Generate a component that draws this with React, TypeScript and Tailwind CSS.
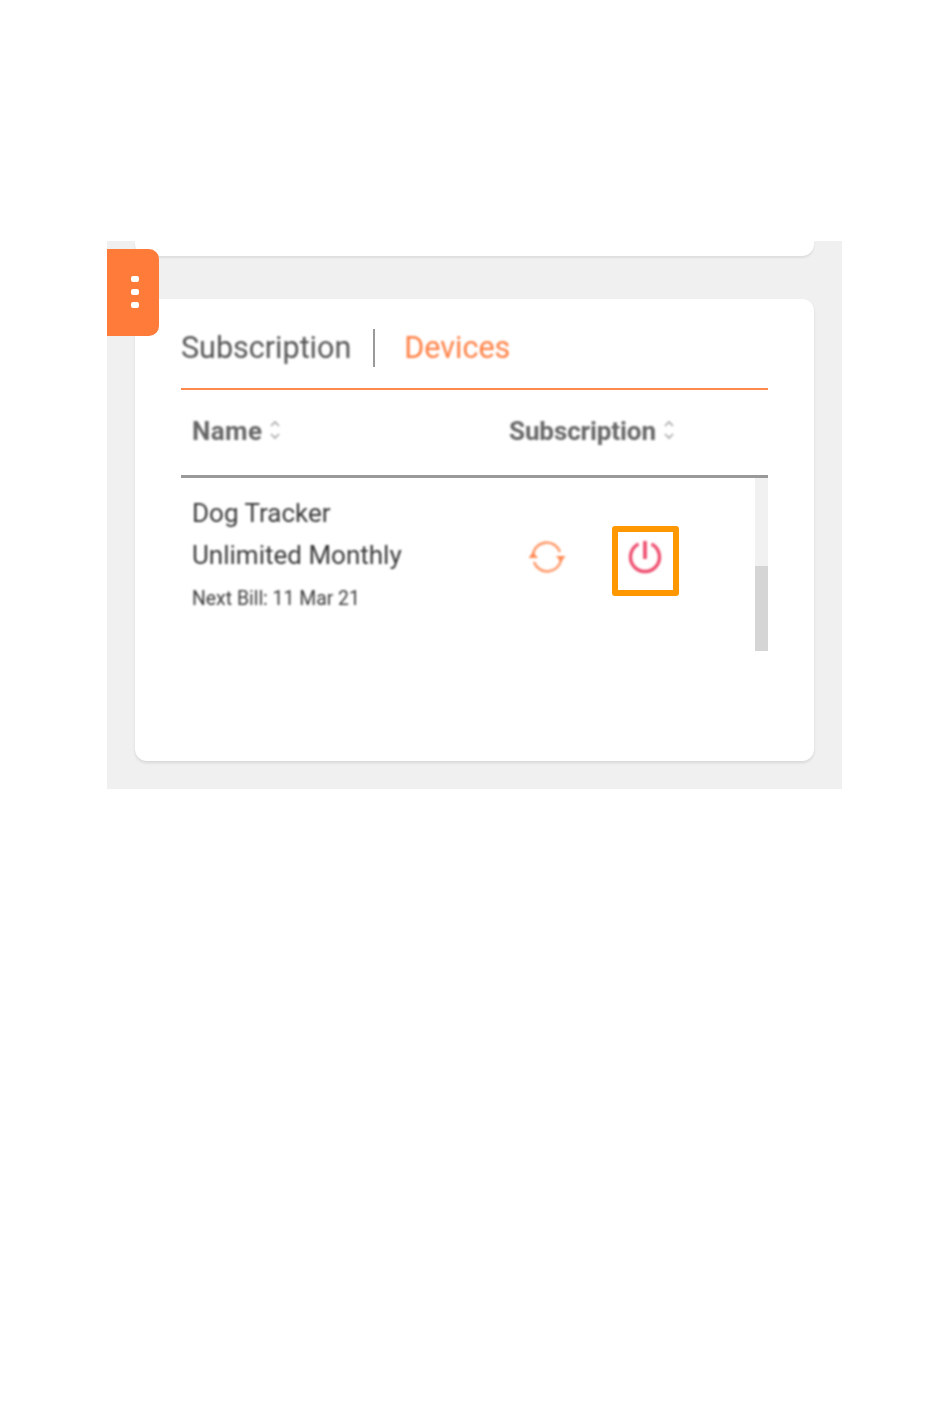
export default function App() {
  const sortIcon = (
    <svg width="14" height="24" viewBox="0 0 14 24" fill="none" stroke="#a8a8a8" strokeWidth="1.6" className="block blur-[0.8px]">
      <path d="M3 8 L7 4 L11 8" />
      <path d="M3 16 L7 20 L11 16" />
    </svg>
  );
  return (
    <div className="min-h-[1420px] bg-white pt-[241px] font-['Roboto',sans-serif]">
      <div className="relative ml-[107px] h-[548px] w-[735px] bg-[#f0f0f0] px-[28px]">
        <div className="absolute left-0 top-[8px] z-10 flex h-[87px] w-[52px] items-start justify-center rounded-r-[10px] bg-[#ff7b39] pl-[4px] pt-[27px]">
          <div className="flex flex-col gap-[7px]">
            <div className="h-[6px] w-[8px] rounded-[2px] bg-white" />
            <div className="h-[6px] w-[8px] rounded-[2px] bg-white" />
            <div className="h-[6px] w-[8px] rounded-[2px] bg-white" />
          </div>
        </div>

        <div className="h-[15px] rounded-b-[12px] bg-white shadow-[0_2px_2px_rgba(0,0,0,0.08)]" />

        <div className="mt-[43px] h-[462px] rounded-[12px] bg-white px-[46px] pt-[31px] shadow-[0_2px_3px_rgba(0,0,0,0.1)]">
          <div className="flex h-[58px] items-start">
            <div className="text-[30.5px] leading-[36px] font-normal text-[#555] blur-[0.8px]">Subscription</div>
            <div className="-mt-[1px] ml-[22px] h-[38px] w-[2px] bg-[#9a9a9a] blur-[0.4px]" />
            <div className="ml-[29px] text-[30.5px] leading-[36px] font-normal text-[#ff8045] blur-[0.8px]">Devices</div>
          </div>
          <div className="h-[2px] bg-[#ff8a50]" />

          <div className="flex h-[88px] items-start border-b-[3px] border-[#999] pl-[11px] pt-[24px]">
            <div className="flex w-[317px] items-center gap-[6px]">
              <span className="text-[26px] leading-[34px] font-bold tracking-[0.4px] text-[#666] blur-[0.8px]">Name</span>
              <span className="-mt-[3px]">{sortIcon}</span>
            </div>
            <div className="flex items-center gap-[6px]">
              <span className="text-[26px] leading-[34px] font-bold tracking-[-0.1px] text-[#666] blur-[0.8px]">Subscription</span>
              <span className="-mt-[3px]">{sortIcon}</span>
            </div>
          </div>

          <div className="flex h-[173px] justify-between">
            <div className="flex flex-1 pl-[11px] pt-[14px]">
              <div className="w-[317px] text-[#3a3a3a] blur-[0.8px]">
                <div className="text-[26px] leading-[43px]">Dog Tracker</div>
                <div className="text-[26px] leading-[40px]">Unlimited Monthly</div>
                <div className="mt-[10px] text-[19.4px] leading-[28px]">Next Bill: 11 Mar 21</div>
              </div>
              <div className="flex items-start pt-[47px]">
                <svg width="40" height="36" viewBox="0 0 40 36" fill="none" className="ml-[18px] block blur-[0.8px]">
                  <path d="M6 15 A14 14 0 0 1 33 13" stroke="#ff9a6b" strokeWidth="2.6" />
                  <path d="M34 21 A14 14 0 0 1 7 23" stroke="#ff9a6b" strokeWidth="2.6" />
                  <path d="M1.5 19 L6 13 L11 19 Z" fill="#ff8a55" />
                  <path d="M29 17 L34 23 L38.5 17 Z" fill="#ff8a55" />
                </svg>
                <div className="-mt-[13px] ml-[45px] flex h-[70px] w-[67px] items-start justify-center rounded-[3px] border-[6px] border-[#ff9800] pr-[1px] pt-[7px]">
                  <svg width="36" height="38" viewBox="0 0 36 38" fill="none" stroke="#ee4f70" strokeWidth="3.4" className="block blur-[0.8px]">
                    <path d="M11.6 5 A14.5 14.5 0 1 0 24.4 5" />
                    <path d="M18 2 V20" strokeWidth="3.8" />
                  </svg>
                </div>
              </div>
            </div>
            <div className="flex w-[13px] flex-col bg-[#f1f1f1] pt-[88px]">
              <div className="h-[85px] bg-[#d5d5d5]" />
            </div>
          </div>
        </div>
      </div>
    </div>
  );
}
